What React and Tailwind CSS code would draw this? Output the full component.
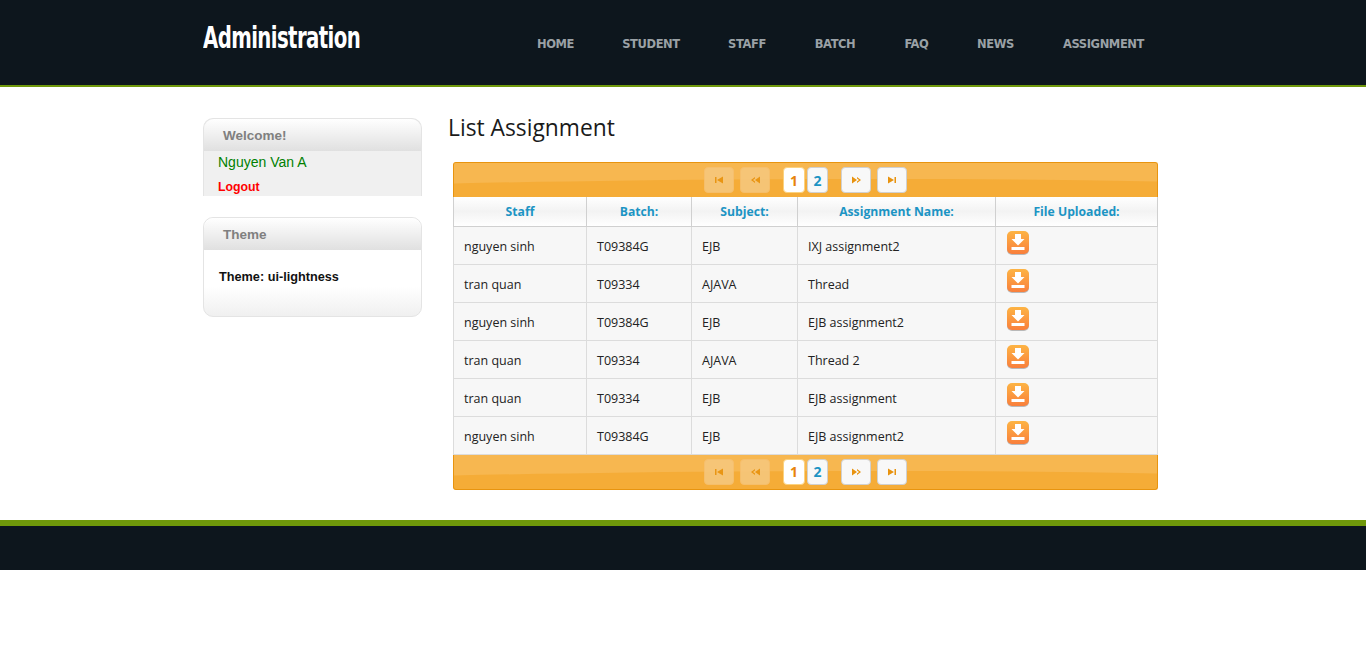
import { useState } from 'react'

const NAV = [
  { label: 'HOME', w: 'w-[85px]' },
  { label: 'STUDENT', w: 'w-[106px]' },
  { label: 'STAFF', w: 'w-[86px]' },
  { label: 'BATCH', w: 'w-[90px]' },
  { label: 'FAQ', w: 'w-[73px]' },
  { label: 'NEWS', w: 'w-[85px]' },
  { label: 'ASSIGNMENT', w: 'w-[131px]' },
]

const ROWS = [
  ['nguyen sinh', 'T09384G', 'EJB', 'IXJ assignment2'],
  ['tran quan', 'T09334', 'AJAVA', 'Thread'],
  ['nguyen sinh', 'T09384G', 'EJB', 'EJB assignment2'],
  ['tran quan', 'T09334', 'AJAVA', 'Thread 2'],
  ['tran quan', 'T09334', 'EJB', 'EJB assignment'],
  ['nguyen sinh', 'T09384G', 'EJB', 'EJB assignment2'],
]

const COLS = [
  { label: 'Staff', w: 'w-[133px]' },
  { label: 'Batch:', w: 'w-[105px]' },
  { label: 'Subject:', w: 'w-[106px]' },
  { label: 'Assignment Name:', w: 'w-[198px]' },
  { label: 'File Uploaded:', w: 'w-[162px]' },
]

function DownloadIcon() {
  return (
    <svg width="22" height="24" viewBox="0 0 22 24" className="block">
      <defs>
        <linearGradient id="dl" x1="0" y1="0" x2="0" y2="1">
          <stop offset="0" stopColor="#fdb444" />
          <stop offset="1" stopColor="#f97f3c" />
        </linearGradient>
      </defs>
      <rect x="0" y="1" width="22" height="23" rx="5" fill="#b9b9b9" />
      <rect x="0" y="0" width="22" height="23" rx="5" fill="url(#dl)" />
      <path d="M8 3h6v5h3.500L11 14.500 4.500 8H8z" fill="#fff" />
      <rect x="4.500" y="16" width="13" height="3" fill="#fff" />
    </svg>
  )
}

function PagerIcon({ kind }) {
  const paths = {
    first: <path d="M0 1h1.500v6H0zM2 4l6-3.500v7z" />,
    prev: <path d="M0 4l4-3v1.500L2 4l2 1.500V7zM4 4l5-3.500v7z" />,
    next: <path d="M0 .5l5 3.500-5 3.500zM5 1l4 3-4 3V5.500L7 4 5 2.500z" />,
    last: <path d="M0 .5l6 3.500-6 3.500zM6.500 1H8v6H6.500z" />,
  }
  return (
    <svg width="9" height="8" viewBox="0 0 9 8" fill="#e8930f">
      {paths[kind]}
    </svg>
  )
}

function Pager({ position }) {
  const [page] = useState(1)
  const edge = position === 'top'
    ? 'border-t border-x border-[#e8940f] rounded-t-[3px] h-[35px]'
    : 'border-b border-x border-[#e8940f] rounded-b-[3px] h-[35px]'
  const dim = 'w-[30px] h-[26px] rounded-[4px] border border-[#f6c070] bg-[#f6c77c] flex items-center justify-center opacity-90'
  const lit = 'w-[30px] h-[26px] rounded-[4px] border border-[#d0d0d0] bg-[#f8f8f8] flex items-center justify-center'
  return (
    <div className={`relative overflow-hidden bg-[#f5ac37] flex items-center justify-center ${edge}`}>
      <svg className="absolute inset-0 w-full h-full" viewBox="0 0 705 35" preserveAspectRatio="none">
        <path d="M0 21 C 200 17, 450 14, 705 19 L705 0 L0 0 Z" fill="#f7b750" />
      </svg>
      <div className="relative flex items-center">
        <span className={dim}><PagerIcon kind="first" /></span>
        <span className={`${dim} ml-[6px]`}><PagerIcon kind="prev" /></span>
        <span className={`ml-[13px] w-[22px] h-[26px] rounded-[4px] border border-[#fbd27f] bg-white text-[#e8830c] text-[14px] font-bold flex items-center justify-center ${page === 1 ? '' : 'hidden'}`}>1</span>
        <span className="ml-[2px] w-[21px] h-[26px] rounded-[4px] border border-[#d0d0d0] bg-[#f8f8f8] text-[#1c94c4] text-[14px] font-bold flex items-center justify-center">2</span>
        <span className={`${lit} ml-[13px]`}><PagerIcon kind="next" /></span>
        <span className={`${lit} ml-[6px]`}><PagerIcon kind="last" /></span>
      </div>
    </div>
  )
}

function SideBox({ title, children, className }) {
  return (
    <div className={`border-x border-t border-[#e4e4e4] rounded-t-[10px] ${className}`}>
      <h3 className="h-[32px] rounded-t-[10px] bg-gradient-to-b from-white to-[#e0e0e0] pl-[19px] pt-[8px] text-[13.500px] leading-[18px] font-bold text-[#808080]">
        {title}
      </h3>
      {children}
    </div>
  )
}

export default function App() {
  return (
    <div className="min-h-[648px] bg-white font-['Liberation_Sans',sans-serif]">
      {/* Header */}
      <header className="h-[87px] bg-[#0d161d] border-b-2 border-[#6f980b]">
        <div className="w-[960px] mx-auto flex">
          <div className="w-[310px] shrink-0 pt-[19px]">
            <h1 className="origin-left scale-x-[0.73] whitespace-nowrap text-[30px] leading-[38px] font-bold text-white font-['DejaVu_Sans_Condensed','DejaVu_Sans',sans-serif] tracking-[-0.800px]">
              Administration
            </h1>
          </div>
          <nav className="flex pt-[36px] font-['DejaVu_Sans',sans-serif] text-[11.500px] leading-[16px] font-bold text-[#9aa1a6]">
            {NAV.map(({ label, w }) => (
              <a key={label} href="#" className={`${w} shrink-0 text-center whitespace-nowrap tracking-[-0.400px]`}>{label}</a>
            ))}
          </nav>
        </div>
      </header>

      {/* Body */}
      <div className="h-[433px] w-[960px] mx-auto flex">
        <aside className="w-[219px] shrink-0 pt-[31px]">
          <SideBox title="Welcome!" className="h-[78px] bg-[#f0f0f0]">
            <p className="pl-[14px] pt-[2px] text-[14px] leading-[18px] text-[#008000]">Nguyen Van A</p>
            <a href="#" className="block pl-[14px] pt-[9px] text-[12.300px] leading-[15px] font-bold text-[#ff0000]">Logout</a>
          </SideBox>
          <div className="mt-[21px] h-[100px] border border-[#e4e4e4] rounded-[10px] bg-gradient-to-b from-white from-70% to-[#f0f0f0]">
            <h3 className="h-[32px] rounded-t-[10px] bg-gradient-to-b from-white to-[#e0e0e0] pl-[19px] pt-[8px] text-[13.500px] leading-[18px] font-bold text-[#808080]">
              Theme
            </h3>
            <p className="pl-[15px] pt-[19px] text-[12.700px] leading-[16px] font-bold text-[#111]">Theme: ui-lightness</p>
          </div>
        </aside>

        <main className="pl-[26px] font-['Open_Sans',sans-serif]">
          <h2 className="pt-[27px] h-[75px] text-[22.800px] leading-[28px] text-[#1a1a1a]">List Assignment</h2>
          <div className="ml-[5px] w-[705px]">
            <Pager position="top" />
            <table className="w-[705px] table-fixed border-collapse text-[12.500px]">
              <thead>
                <tr className="h-[29px] bg-gradient-to-b from-white via-[#f3f3f3] to-white">
                  {COLS.map(({ label, w }) => (
                    <th key={label} className={`${w} border border-[#d0d0d0] border-t-0 pt-[1px] text-[12.200px] font-bold text-[#1c94c4]`}>{label}</th>
                  ))}
                </tr>
              </thead>
              <tbody>
                {ROWS.map((row, i) => (
                  <tr key={i} className="h-[38px] bg-[#f7f7f7] text-[#222]">
                    {row.map((cell, j) => (
                      <td key={j} className="border border-[#dcdcdc] pl-[10px] pt-[4px]">{cell}</td>
                    ))}
                    <td className="border border-[#dcdcdc] pl-[11px] pb-[5px]"><DownloadIcon /></td>
                  </tr>
                ))}
              </tbody>
            </table>
            <Pager position="bottom" />
          </div>
        </main>
      </div>

      {/* Footer */}
      <footer className="h-[50px] bg-[#0d161d] border-t-[6px] border-[#6f980b]" />
    </div>
  )
}
